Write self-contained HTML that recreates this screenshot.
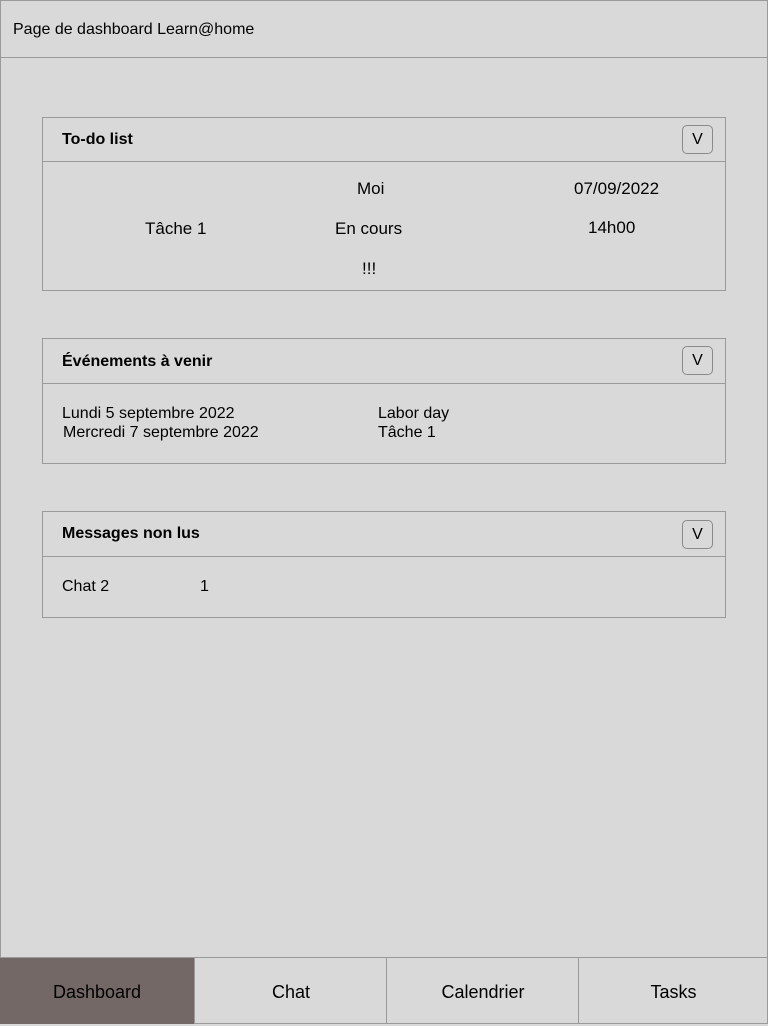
<!DOCTYPE html>
<html><head><meta charset="utf-8"><style>
body{margin:0;width:768px;height:1024px;background:#d9d9d9;font-family:"Liberation Sans",sans-serif;color:#000;position:relative;overflow:hidden}
.a{position:absolute;white-space:nowrap}
.box{position:absolute;border:1px solid #9a9a9a;box-sizing:border-box}
.btn{position:absolute;width:31px;height:29px;border:1px solid #8a8a8a;border-radius:5px;box-sizing:border-box;text-align:center;line-height:28px;font-size:16px}
.t{font-size:17px}
.s{font-size:16px}
.b{font-weight:bold;font-size:16px}
.tab{position:absolute;top:957px;height:67px;border-left:1px solid #9a9a9a;border-top:1px solid #9a9a9a;box-sizing:border-box;text-align:center;line-height:68px;font-size:18px}
</style></head><body>
<div class="box" style="left:0;top:0;width:768px;height:1024px"></div>
<div class="box" style="left:0;top:0;width:768px;height:58px"></div>
<div class="a" style="left:13px;top:21px;font-size:16px">Page de dashboard Learn@home</div>

<div class="box" style="left:42px;top:117px;width:684px;height:174px"></div>
<div class="box" style="left:42px;top:117px;width:684px;height:45px"></div>
<div class="a b" style="left:62px;top:131px">To-do list</div>
<div class="btn" style="left:682px;top:125px">V</div>
<div class="a t" style="left:357px;top:179px">Moi</div>
<div class="a t" style="left:574px;top:179px">07/09/2022</div>
<div class="a t" style="left:145px;top:219px">Tâche 1</div>
<div class="a t" style="left:335px;top:219px">En cours</div>
<div class="a t" style="left:588px;top:218px">14h00</div>
<div class="a t" style="left:362px;top:259px">!!!</div>

<div class="box" style="left:42px;top:338px;width:684px;height:126px"></div>
<div class="box" style="left:42px;top:338px;width:684px;height:46px"></div>
<div class="a b" style="left:62px;top:353px">Événements à venir</div>
<div class="btn" style="left:682px;top:346px">V</div>
<div class="a s" style="left:62px;top:405px">Lundi 5 septembre 2022</div>
<div class="a s" style="left:63px;top:424px">Mercredi 7 septembre 2022</div>
<div class="a s" style="left:378px;top:405px">Labor day</div>
<div class="a s" style="left:378px;top:424px">Tâche 1</div>

<div class="box" style="left:42px;top:511px;width:684px;height:107px"></div>
<div class="box" style="left:42px;top:511px;width:684px;height:46px"></div>
<div class="a b" style="left:62px;top:525px">Messages non lus</div>
<div class="btn" style="left:682px;top:520px">V</div>
<div class="a s" style="left:62px;top:578px">Chat 2</div>
<div class="a s" style="left:200px;top:578px">1</div>

<div class="tab" style="left:0;width:194px;background:#736866;border-left:none">Dashboard</div>
<div class="tab" style="left:194px;width:193px">Chat</div>
<div class="tab" style="left:386px;width:193px">Calendrier</div>
<div class="tab" style="left:578px;width:190px">Tasks</div>
</body></html>
